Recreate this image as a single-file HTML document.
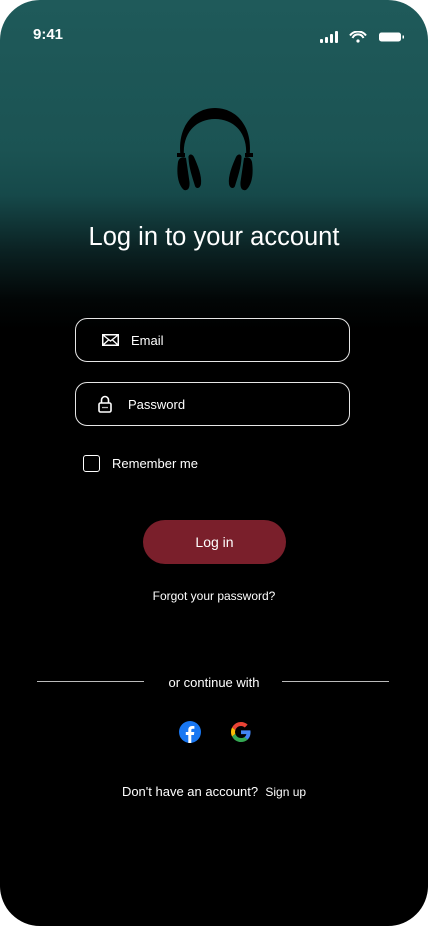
<!DOCTYPE html>
<html><head><meta charset="utf-8"><style>
*{margin:0;padding:0;box-sizing:border-box}
body{width:428px;height:926px;background:#fff;font-family:"Liberation Sans",sans-serif;overflow:hidden}
.ph{position:absolute;left:0;top:0;width:428px;height:926px;border-radius:40px;overflow:hidden;
background:linear-gradient(180deg,#1f5a5a 0px,#1b5353 150px,#16494a 195px,#0b2223 250px,#020606 300px,#000 330px,#000 926px);color:#fff}
.a{position:absolute}
.inp{position:absolute;left:75px;width:275px;height:44px;border:1px solid #e6e6e6;border-radius:12px;font-size:13px}
.c{text-align:center;width:428px;left:0}
</style></head><body><div class="ph">
<div class="a" style="left:33px;top:26px;font-size:15px;font-weight:bold">9:41</div>
<svg class="a" style="left:320px;top:31px" width="86" height="12" viewBox="0 0 86 12">
<rect x="0" y="8" width="3" height="4" rx="1" fill="#fff"/><rect x="5" y="6" width="3" height="6" rx="1" fill="#fff"/><rect x="10" y="3" width="3" height="9" rx="1" fill="#fff"/><rect x="15" y="0" width="3" height="12" rx="1" fill="#fff"/>
<path d="M30 4.5a10 10 0 0 1 16 0M32.5 7a6 6 0 0 1 11 0" stroke="#fff" stroke-width="2" fill="none"/><circle cx="38" cy="10" r="1.6" fill="#fff"/>
<rect x="59" y="1.5" width="22" height="9" rx="2.5" fill="#fff"/><rect x="82.5" y="4.5" width="1.5" height="3" fill="#fff"/>
</svg>
<svg class="a" style="left:174px;top:106px" width="82" height="86" viewBox="0 0 82 86">
<path d="M6.5 50C3 20 20 2 41 2S79 20 75.5 50L72 50C74 27 60 13 41 13S8 27 10 50Z" fill="#000"/>
<rect x="3" y="47" width="8" height="4" fill="#000"/><rect x="71" y="47" width="8" height="4" fill="#000"/>
<path d="M4 56C2 70 5 80 10 84C14 85 16 82 15.5 76L12 52C8 50 5 52 4 56Z" fill="#000"/>
<path d="M14.5 52C14 48 18 47 20 51C24 60 28 70 27 78C26 83 22 83 21 80C18 70 15 62 14.5 52Z" fill="#000"/>
<path d="M78 56C80 70 77 80 72 84C68 85 66 82 66.5 76L70 52C74 50 77 52 78 56Z" fill="#000"/>
<path d="M67.5 52C68 48 64 47 62 51C58 60 54 70 55 78C56 83 60 83 61 80C64 70 67 62 67.5 52Z" fill="#000"/>
</svg>
<div class="a c" style="top:223px;font-size:25.5px">Log in to your account</div>
<div class="inp" style="top:318px"><svg class="a" style="left:26px;top:15px" width="17" height="12" viewBox="0 0 17 12"><rect x=".75" y=".75" width="15.5" height="10.5" fill="none" stroke="#fff" stroke-width="1.5"/><path d="M1 1l7.5 6 7.5-6M1 11l5.5-5M16 11l-5.5-5" stroke="#fff" stroke-width="1.3" fill="none"/></svg><span class="a" style="left:55px;top:14px">Email</span></div>
<div class="inp" style="top:382px"><svg class="a" style="left:22px;top:12px" width="14" height="18" viewBox="0 0 14 18"><path d="M3.5 8V5a3.5 3.5 0 0 1 7 0v3" stroke="#fff" stroke-width="1.6" fill="none"/><rect x="1" y="8" width="12" height="9" rx="1.5" fill="none" stroke="#fff" stroke-width="1.6"/><circle cx="5" cy="12.5" r=".8" fill="#fff"/><circle cx="7" cy="12.5" r=".8" fill="#fff"/><circle cx="9" cy="12.5" r=".8" fill="#fff"/></svg><span class="a" style="left:52px;top:14px">Password</span></div>
<div class="a" style="left:83px;top:455px;width:17px;height:17px;border:1.5px solid #fff;border-radius:3px"></div>
<div class="a" style="left:112px;top:456px;font-size:13px">Remember me</div>
<div class="a" style="left:143px;top:520px;width:143px;height:44px;border-radius:22px;background:#7a1f2b;font-size:14px;text-align:center;line-height:44px">Log in</div>
<div class="a c" style="top:589px;font-size:12px">Forgot your password?</div>
<div class="a" style="left:37px;top:681px;width:107px;height:1px;background:#bbb"></div>
<div class="a" style="left:282px;top:681px;width:107px;height:1px;background:#bbb"></div>
<div class="a c" style="top:675px;font-size:13px">or continue with</div>
<svg class="a" style="left:179px;top:721px" width="22" height="22" viewBox="0 0 22 22"><circle cx="11" cy="11" r="11" fill="#1877f2"/><path d="M12.3 22V14h2.6l.4-3h-3V9.2c0-.9.3-1.5 1.5-1.5h1.6V5.1c-.3 0-1.2-.1-2.3-.1-2.3 0-3.8 1.4-3.8 3.9V11H6.8v3h2.5v8z" fill="#fff"/></svg>
<svg class="a" style="left:231px;top:722px" width="20" height="20" viewBox="0 0 48 48"><path fill="#EA4335" d="M24 9.5c3.5 0 6.6 1.2 9.1 3.6l6.8-6.8C35.8 2.4 30.3 0 24 0 14.6 0 6.6 5.4 2.6 13.2l7.9 6.2C12.4 13.6 17.7 9.5 24 9.5z"/><path fill="#4285F4" d="M46.9 24.5c0-1.6-.1-3.1-.4-4.5H24v9h12.9c-.6 3-2.3 5.5-4.8 7.2l7.7 6c4.5-4.2 7.1-10.3 7.1-17.7z"/><path fill="#FBBC05" d="M10.5 28.6c-.5-1.5-.8-3-.8-4.6s.3-3.1.8-4.6l-7.9-6.2C.9 16.5 0 20.1 0 24s.9 7.5 2.6 10.8z"/><path fill="#34A853" d="M24 48c6.5 0 11.9-2.1 15.9-5.8l-7.7-6c-2.200 1.5-5 2.3-8.2 2.3-6.3 0-11.6-4.2-13.5-9.9l-7.9 6.1C6.6 42.6 14.6 48 24 48z"/></svg>
<div class="a c" style="top:784px;font-size:13px">Don't have an account?&nbsp; <span style="font-size:12px">Sign up</span></div>
</div></body></html>
